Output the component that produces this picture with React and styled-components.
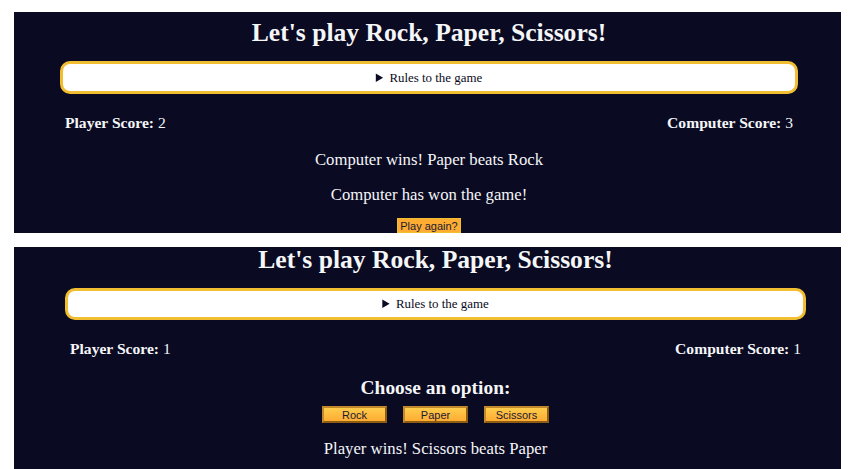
import React from "react";
import styled, { createGlobalStyle } from "styled-components";

const GlobalStyle = createGlobalStyle`
  html, body {
    margin: 0;
    padding: 0;
    background: #ffffff;
    font-family: "Liberation Serif", "Times New Roman", serif;
  }
  body {
    width: 854px;
    height: 469px;
    overflow: hidden;
  }
`;

const Page = styled.div`
  display: flex;
  flex-direction: column;
  gap: 14px;
  padding: 12px 13px 0 14px;
`;

const Panel = styled.section`
  background: #0a0a23;
  color: #f5f6f7;
  height: ${(p) => p.height}px;
  overflow: hidden;
  padding: 0 ${(p) => p.right}px 0 ${(p) => p.left}px;
  display: flex;
  flex-direction: column;
  align-items: stretch;
`;

const Title = styled.h1`
  margin: ${(p) => p.top}px 0 0;
  font-size: 25.6px;
  line-height: 32px;
  font-weight: bold;
  text-align: center;
`;

const Rules = styled.details`
  margin-top: 12px;
  background: #ffffff;
  border: 3px solid #f1be32;
  border-radius: 10px;
  height: ${(p) => p.inner}px;
  color: #0a0a23;
  font-size: 12.9px;
  text-align: center;

  summary {
    line-height: ${(p) => p.inner + 1}px;
    list-style-position: inside;
    cursor: pointer;
  }
`;

const ScoreRow = styled.div`
  margin-top: 19px;
  display: flex;
  justify-content: space-between;
  padding: 0 5px;
  font-size: 15.6px;
  line-height: 20px;

  strong {
    font-weight: bold;
  }
`;

const Message = styled.p`
  margin: ${(p) => p.top}px 0 0;
  font-size: 16.7px;
  line-height: 22px;
  text-align: center;
`;

const Choose = styled.h2`
  margin: 17px 0 0;
  font-size: 19.4px;
  line-height: 24px;
  font-weight: bold;
  text-align: center;
`;

const Options = styled.div`
  margin-top: 6px;
  display: flex;
  justify-content: center;
  gap: 16px;
`;

const OptionButton = styled.button`
  width: 65px;
  height: 17px;
  padding: 0;
  font-family: "Liberation Sans", Arial, sans-serif;
  font-size: 11px;
  color: #1b1b32;
  background-color: #feac32;
  background-image: linear-gradient(#fecc4c, #ffac33);
  border: 2px solid;
  border-color: #c08a2c #8f5d12 #8f5d12 #c08a2c;
  cursor: pointer;
`;

const Again = styled.button`
  align-self: center;
  margin-top: 12px;
  height: 17px;
  padding: 0 2px;
  font-family: "Liberation Sans", Arial, sans-serif;
  font-size: 11px;
  color: #1b1b32;
  background-color: #feac32;
  border: 1px solid #f1be32;
`;

const Scores = ({ player, computer }) => (
  <ScoreRow>
    <span>
      <strong>Player Score:</strong> {player}
    </span>
    <span>
      <strong>Computer Score:</strong> {computer}
    </span>
  </ScoreRow>
);

const Header = ({ top, inner }) => (
  <>
    <Title top={top}>Let's play Rock, Paper, Scissors!</Title>
    <Rules inner={inner}>
      <summary>Rules to the game</summary>
    </Rules>
  </>
);

export default function App() {
  return (
    <Page>
      <GlobalStyle />
      <Panel height={221} left={46} right={43}>
        <Header top={5} inner={27} />
        <Scores player={2} computer={3} />
        <Message top={16}>Computer wins! Paper beats Rock</Message>
        <Message top={13}>Computer has won the game!</Message>
        <Again>Play again?</Again>
      </Panel>
      <Panel height={230} left={51} right={35}>
        <Header top={-3} inner={26} />
        <Scores player={1} computer={1} />
        <Choose>Choose an option:</Choose>
        <Options>
          <OptionButton>Rock</OptionButton>
          <OptionButton>Paper</OptionButton>
          <OptionButton>Scissors</OptionButton>
        </Options>
        <Message top={15}>Player wins! Scissors beats Paper</Message>
      </Panel>
    </Page>
  );
}
